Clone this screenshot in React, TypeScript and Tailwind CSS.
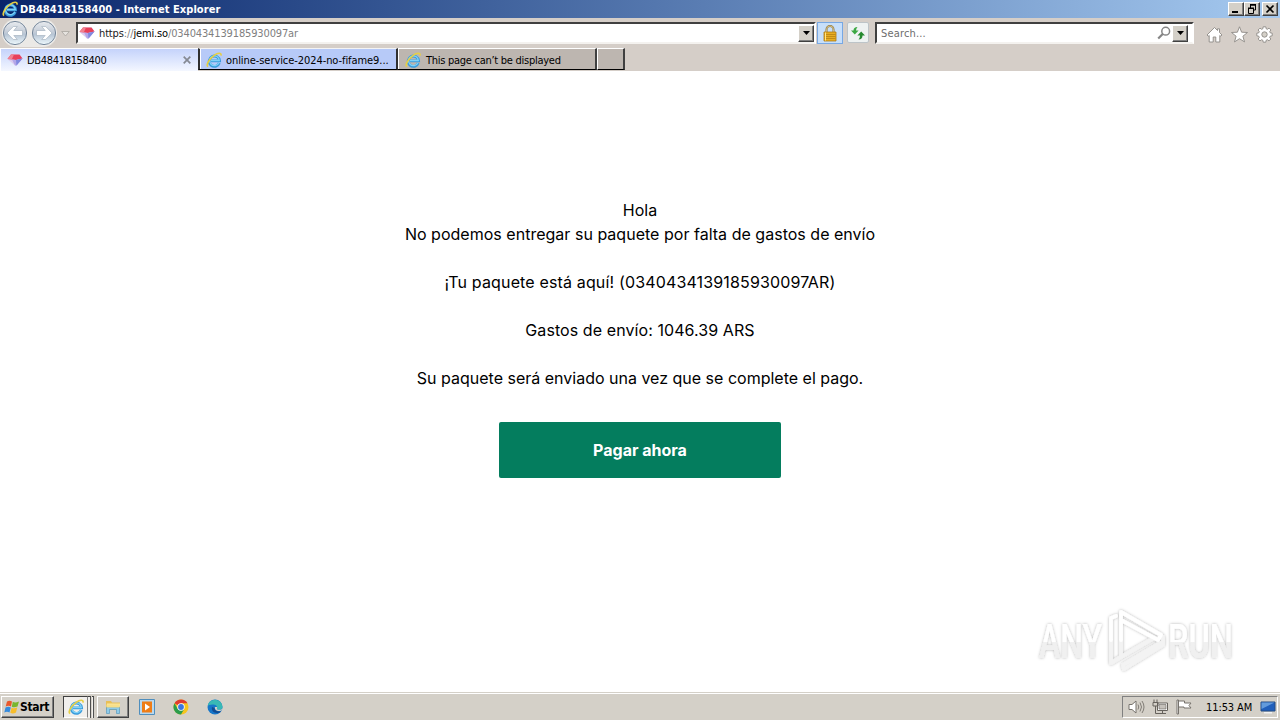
import React from 'react';

const raised =
  'border border-t-white border-l-white border-r-[#404040] border-b-[#404040] shadow-[inset_-1px_-1px_0_#808080] bg-[#d4d0c8]';
const ui = "font-['DejaVu_Sans_Condensed','DejaVu_Sans',sans-serif] [font-stretch:condensed] whitespace-nowrap";

function IeIcon({ className = '' }: { className?: string }) {
  return (
    <svg viewBox="0 0 16 16" className={`h-4 w-4 shrink-0 ${className}`} fill="none">
      <path d="M13.300 11A5.200 5.200 0 1 1 13.600 8.900H5" stroke="#3a9bdc" strokeWidth="2.800" />
      <path d="M12.900 10.700A4.900 4.900 0 1 1 13.300 8.500H5" stroke="#7fd2f7" strokeWidth="1.300" />
      <path d="M2 14.600C-.4 12.900 3.400 6.800 8.200 3.400 11.800.8 15.500.2 15 3.600" stroke="#e6cf45" strokeWidth="1.700" />
    </svg>
  );
}

function GemIcon() {
  return (
    <svg viewBox="0 0 16 12" className="h-3 w-4 shrink-0">
      <path d="M4 .5h8.500L15.500 4.500 9.500 11.500H8L.5 5z" fill="#dccbee" />
      <path d="M4 .5h8.500L15.500 4.500 9 6 .5 5z" fill="#e8405a" />
      <path d="M4 .5h3L5 5 .5 5z" fill="#f1808f" />
      <path d="M5 5.500L9 6l6.500-1.500-6 7H8z" fill="#b3a6e8" />
      <path d="M9 6l6.500-1.500-6 7z" fill="#8088df" />
    </svg>
  );
}

function NavArrow({ flip = false }: { flip?: boolean }) {
  return (
    <svg viewBox="0 0 26 26" className={`h-[26px] w-[26px] shrink-0 ${flip ? '-scale-x-100' : ''}`}>
      <defs>
        <linearGradient id="navFill" x1="0" y1="0" x2="0" y2="1">
          <stop offset="0" stopColor="#e8ebef" />
          <stop offset=".45" stopColor="#c5cdd8" />
          <stop offset=".55" stopColor="#b6c4d4" />
          <stop offset="1" stopColor="#eef9fd" />
        </linearGradient>
      </defs>
      <circle cx="13" cy="13" r="12.500" fill="#f3f2f0" />
      <circle cx="13" cy="13" r="11.600" fill="url(#navFill)" stroke="#76879a" />
      <path d="M5 13l6.300-6.500h4L11.800 10.500H20.500v5h-8.700l3.500 4h-4z" fill="#fff" stroke="#a8b4c2" strokeWidth=".7" />
    </svg>
  );
}

function DropButton() {
  return (
    <div className={`flex h-[17px] w-4 shrink-0 items-center justify-center ${raised}`}>
      <svg viewBox="0 0 7 4" className="h-1 w-[7px]">
        <path d="M0 0h7L3.500 4z" fill="#000" />
      </svg>
    </div>
  );
}

function TitleBar() {
  return (
    <div className="flex h-[18px] items-center bg-linear-to-r from-[#0a246a] to-[#a6caf0] pl-[2px] pr-[2px]">
      <IeIcon />
      <span className={`ml-[2px] grow pt-px text-[11px] leading-[17px] font-bold tracking-[0.06px] text-white ${ui}`}>
        DB48418158400 - Internet Explorer
      </span>
      <div className={`flex h-[14px] w-4 items-center justify-center ${raised}`}>
        <svg viewBox="0 0 12 10" className="h-[10px] w-3"><path d="M2 7h6v2H2z" /></svg>
      </div>
      <div className={`flex h-[14px] w-4 items-center justify-center ${raised}`}>
        <svg viewBox="0 0 12 10" className="h-[10px] w-3" fill="none" stroke="#000">
          <path d="M4 1h6M4.500 1v3M9.500 1v5H8M2 4.500h6M2.500 4v5.500h5V4" />
          <path d="M4 .8h6M2 4.200h6" strokeWidth="1.600" />
        </svg>
      </div>
      <div className={`ml-[2px] flex h-[14px] w-4 items-center justify-center ${raised}`}>
        <svg viewBox="0 0 12 10" className="h-[10px] w-3"><path d="M2.500 1.500l7 7M9.500 1.500l-7 7" stroke="#000" strokeWidth="1.700" /></svg>
      </div>
    </div>
  );
}

function Toolbar() {
  return (
    <div className="flex h-[30px] items-start pt-1">
      <div className="mt-[-3px] ml-[2px] flex h-7 w-[55px] items-center justify-between rounded-full bg-[#ebe9e6]">
        <NavArrow />
        <NavArrow flip />
      </div>
      <svg viewBox="0 0 9 6" className="mt-[9px] ml-[4px] h-[6px] w-[9px]">
        <path d="M.7.5h7.600L4.500 5z" fill="#e6e3df" stroke="#aaa69f" strokeWidth=".8" />
      </svg>
      <div className="ml-[6px] flex h-[22px] w-[740px] items-center border-2 border-t-[#404040] border-l-[#404040] border-r-white border-b-[#f4f2ef] bg-white pl-[1px]">
        <GemIcon />
        <span className={`ml-1 grow pt-[2px] text-[11px] leading-[18px] tracking-[-0.14px] text-[#808080] ${ui}`}>
          <span className="text-[#202020]">https</span>://<span className="text-black">jemi.so</span>/0340434139185930097ar
        </span>
        <DropButton />
      </div>
      <div className="ml-[1px] flex h-[22px] w-[26px] items-center justify-center border border-[#77a8e4] bg-[#c7dffa]">
        <svg viewBox="0 0 14 17" className="h-[17px] w-[14px]">
          <path d="M3.500 8V4.500a3.500 3.500 0 0 1 7 0V8" fill="none" stroke="#91783c" strokeWidth="2" />
          <path d="M3.500 8V4.500a3.500 3.500 0 0 1 7 0V8" fill="none" stroke="#e9d9a5" strokeWidth=".7" />
          <path d="M1 7h12v9H1z" fill="#e8ae22" stroke="#ae790f" strokeWidth=".8" />
          <path d="M1.500 9.500h11M1.500 11.500h11M1.500 13.500h11" stroke="#b88212" strokeWidth=".8" />
          <path d="M2.500 7.500v8" stroke="#ffe58a" />
        </svg>
      </div>
      <div className="ml-[4px] flex h-[21px] w-[22px] items-center justify-center rounded-[2px] border border-[#bdc4c8] bg-[#eef2f2]">
        <svg viewBox="0 0 16 14" className="h-[14px] w-4">
          <path d="M7.500 1Q3.500 1 3.500 4.500H1l3.800 4 3.800-4H6Q6 2.500 7.500 1z" fill="#3ba843" />
          <path d="M8.500 13.500Q12.500 13.500 12.500 9.500H15l-3.800-4-3.800 4H10Q10 12 8.500 13.500z" fill="#268a30" />
        </svg>
      </div>
      <div className="ml-[6px] flex h-[22px] w-[319px] items-center border-2 border-t-[#404040] border-l-[#404040] border-r-white border-b-[#f4f2ef] bg-white pl-[4px]">
        <span className={`grow pt-[2px] text-[11px] leading-[18px] tracking-[0.17px] text-[#6d6d6d] ${ui}`}>Search...</span>
        <svg viewBox="0 0 14 14" className="mr-[1px] h-[14px] w-[14px]" fill="none" stroke="#858585">
          <circle cx="8.700" cy="5.200" r="3.900" strokeWidth="1.500" />
          <path d="M5.700 8L1.200 12.500" strokeWidth="2.200" />
        </svg>
        <DropButton />
        <div className="w-1" />
      </div>
      <div className="mt-[4px] ml-[12px] flex gap-2">
        <svg viewBox="0 0 17 17" className="h-[17px] w-[17px]">
          <path d="M8.500 1.500L1 9l1.300 1.200.9-.8V16h4v-5h2.600v5h4V9.400l.9.800L16 9l-2.500-2.500V2.800h-2v1.700z" fill="#fff" stroke="#8d8a86" strokeWidth=".9" />
        </svg>
        <svg viewBox="0 0 17 17" className="h-[17px] w-[17px]">
          <path d="M8.500.8l2.100 5.400 5.900.3-4.600 3.700 1.600 5.700-5-3.200-5 3.200 1.600-5.700L.5 6.500l5.900-.3z" fill="#fff" stroke="#8d8a86" strokeWidth=".9" />
        </svg>
        <svg viewBox="0 0 17 17" className="h-[17px] w-[17px]">
          <path d="M7.200.8h2.600l.4 2 1.200.5L13 2.100l1.900 1.900-1.200 1.700.5 1.100 2 .4v2.600l-2 .4-.5 1.200 1.200 1.600-1.900 1.900-1.600-1.200-1.200.5-.4 2H7.200l-.4-2-1.200-.5L4 14.900 2.100 13l1.200-1.600-.5-1.200-2-.4V7.200l2-.4.5-1.100L2.100 4 4 2.100l1.600 1.200 1.200-.5z" fill="#fff" stroke="#8d8a86" strokeWidth=".9" />
          <circle cx="8.500" cy="8.500" r="2.700" fill="#d4d0c8" stroke="#8d8a86" strokeWidth=".9" />
        </svg>
      </div>
    </div>
  );
}

function Tabs() {
  return (
    <div className="flex h-[23px] text-[11px] leading-[20px] text-black">
      <div className="flex h-[23px] w-[198px] items-center border-t border-l border-white bg-linear-to-b from-[#c5d3fb] to-[#f4f7ff] pl-[6px] pr-[7px]">
        <GemIcon />
        <span className={`ml-[4px] grow pt-[2px] tracking-[-0.32px] ${ui}`}>DB48418158400</span>
        <svg viewBox="0 0 8 8" className="h-2 w-2"><path d="M.7.7l6.600 6.600M7.300.7L.7 7.300" stroke="#858993" strokeWidth="1.700" /></svg>
      </div>
      <div className="flex h-[22px] w-[200px] items-center border-l-2 border-r-2 border-b border-t border-l-[#303030] border-t-[#f4f4f4] border-r-[#303030] border-b-black bg-[#b7caf8] pl-[6px] shadow-[inset_1px_0_0_#fff]">
        <IeIcon className="mt-px" />
        <span className={`ml-[4px] pt-[3px] tracking-[-0.07px] ${ui}`}>online-service-2024-no-fifame9...</span>
      </div>
      <div className="flex h-[22px] w-[199px] items-center border-r-2 border-b border-t border-t-white border-r-[#404040] border-b-black bg-[#bdb6b0] pl-[7px] shadow-[inset_1px_0_0_#fff]">
        <IeIcon className="mt-px" />
        <span className={`ml-[5px] pt-[3px] tracking-[-0.27px] ${ui}`}>This page can’t be displayed</span>
      </div>
      <div className="h-[22px] w-[28px] border-t border-l border-r-2 border-b border-t-white border-l-white border-r-[#404040] border-b-black bg-[#bdb6b0]" />
    </div>
  );
}

function Watermark() {
  return (
    <svg viewBox="0 0 214 80" className="absolute right-[36px] bottom-[12px] h-20 w-[214px] overflow-visible">
      <defs>
        <linearGradient id="wm" x1="0" y1="24" x2="0" y2="59" gradientUnits="userSpaceOnUse">
          <stop offset=".5" stopColor="#fff" />
          <stop offset=".53" stopColor="#f0f0f0" />
        </linearGradient>
        <filter id="soft" x="-10%" y="-20%" width="120%" height="140%">
          <feDropShadow dx="0" dy="0" stdDeviation="1.500" floodColor="#000" floodOpacity=".3" />
        </filter>
      </defs>
      <g filter="url(#soft)" fill="url(#wm)" className="font-['Roboto',sans-serif]" fontSize="48" fontWeight="500">
        <text x="9" y="58" textLength="63" lengthAdjust="spacingAndGlyphs">ANY</text>
        <text x="138" y="58" textLength="65" lengthAdjust="spacingAndGlyphs">RUN</text>
        <g fill="none" stroke="#f3f3f3" strokeWidth="3.800" strokeLinejoin="round" strokeLinecap="round">
          <path d="M81 40V63l10-6" />
          <path d="M91 40V57l33-19" />
          <path d="M130 43L93 65l1 4 39-24V37" />
          <path d="M81 40V18l5-2M91 40V12l40 23-3 5L91 20" stroke="#fff" />
        </g>
      </g>
    </svg>
  );
}

function Page() {
  return (
    <main className="relative flex h-[621px] flex-col items-center bg-white pt-[127px]">
      <div className="text-center font-['Inter',sans-serif] text-[16px] leading-6 whitespace-pre text-black">
        <p>Hola</p>
        <p className="tracking-[0.02px]">No podemos entregar su paquete por falta de gastos de envío</p>
        <p className="mt-6 tracking-[0.15px]">¡Tu paquete está aquí! (0340434139185930097AR)</p>
        <p className="mt-6 tracking-[0.08px]">Gastos de envío: 1046.39 ARS</p>
        <p className="mt-6">Su paquete será enviado una vez que se complete el pago.</p>
      </div>
      <button className="mt-8 h-14 w-[282px] rounded-[2px] bg-[#047d5e] font-['Inter',sans-serif] text-[16px] font-bold text-white">
        Pagar ahora
      </button>
      <Watermark />
    </main>
  );
}

function Taskbar() {
  return (
    <footer className="flex h-7 items-center border-t border-[#d4d0c8] bg-[#d4d0c8] pr-[2px] pl-px shadow-[inset_0_1px_0_#fff]">
      <div className={`mt-px flex h-[22px] w-[53px] items-center pl-[2px] ${raised}`}>
        <svg viewBox="0 0 16 16" className="h-4 w-4">
          <path d="M3 2.500Q5.500 1 8 2.500L7 7.500Q4.500 6 1.700 7.500z" fill="#e9582b" />
          <path d="M8.800 2.700Q11 4.200 15 2.500L13.500 7.500Q10 9 7.800 7.700z" fill="#79b62e" />
          <path d="M1.500 8.500Q4.500 7 6.800 8.500L5.500 13.500Q3 12 .3 13.500z" fill="#358bdd" />
          <path d="M7.600 8.800Q10 10 13.200 8.500L12 13.500Q9 15.200 6.300 13.800z" fill="#f7bd2b" />
        </svg>
        <span className={`text-[12px] leading-[18px] font-bold tracking-[-0.3px] ${ui}`}>Start</span>
      </div>
      <div className="mt-px ml-[9px] flex h-[22px] w-[25px] items-center justify-center border border-t-[#404040] border-l-[#404040] border-r-[#808080] border-b-white bg-[#f1efec]">
        <IeIcon />
      </div>
      <div className="mt-px h-[22px] w-[3px] border-t border-r border-t-[#404040] border-r-[#505050] bg-[#f1efec]" />
      <div className="mt-px ml-[1px] h-[22px] w-[2px] border-t border-r border-t-[#404040] border-r-[#505050] bg-[#f1efec]" />
      <div className={`mt-px ml-[3px] flex h-[22px] w-8 items-center justify-center ${raised}`}>
        <svg viewBox="0 0 16 16" className="h-4 w-4">
          <path d="M1 2h5l1 1.500h8V11H1z" fill="#e8bf56" />
          <path d="M2 4.500h13V10H2z" fill="#fbe69c" />
          <path d="M1.500 8h13v6.500h-3v-4h-7v4h-3z" fill="#8ecbe9" stroke="#4c91ba" strokeWidth=".6" />
          <path d="M1.500 5.500h13v3h-13z" fill="#f7df89" />
        </svg>
      </div>
      <svg viewBox="0 0 16 16" className="mt-px ml-[10px] h-4 w-4">
        <path d="M.5.500h15v15H.5z" fill="#b9d8ee" stroke="#4f8ebd" />
        <path d="M3 2.500h10v11H3z" fill="#ef7d16" />
        <path d="M6 4.500l5 3.500-5 3.500z" fill="#fff" />
      </svg>
      <svg viewBox="0 0 16 16" className="mt-px ml-[18px] h-4 w-4">
        <circle cx="8" cy="8" r="7.500" fill="#f6c51e" />
        <path d="M8 8L1.500 4.250A7.500 7.500 0 0 1 14.500 4.250H8z" fill="#df3b30" />
        <path d="M1.500 4.250A7.500 7.500 0 0 0 8 15.500L11.200 9.900 4.800 9.900z" fill="#2b9c4c" />
        <circle cx="8" cy="8" r="3.700" fill="#fff" />
        <circle cx="8" cy="8" r="2.900" fill="#3b76e0" />
      </svg>
      <svg viewBox="0 0 16 16" className="mt-px ml-[18px] h-4 w-4">
        <circle cx="8" cy="8" r="7.500" fill="#1676c9" />
        <path d="M.6 7A7.500 7.500 0 0 1 15.500 8c0 3-4.500 3.500-5.700 2C11 8.500 9.500 5.500 6.500 5.500 3.500 5.200 1 6.500.6 7z" fill="#38b9b5" />
        <path d="M5 8c-1 3 1.500 6 5 6 2 0 3.500-.7 4.300-1.800C11 13.300 7.500 11.500 7.500 9z" fill="#124b91" />
        <path d="M8 8c-.5 1.500.5 4 4 4 1.500 0 2.300-.3 3.200-1.200L15 10c-1.500 1.200-4.800 1-5.300 0 .7-.8.500-1.500.3-2z" fill="#d4d0c8" />
      </svg>
      <div className="grow" />
      <div className="mt-px flex h-[22px] w-[156px] items-center border border-t-[#808080] border-l-[#808080] border-r-white border-b-white pl-[5px]">
        <svg viewBox="0 0 17 16" className="h-4 w-[17px]" fill="none" stroke="#77736d">
          <path d="M1 5.500h3L8 2v12l-4-3.500H1z" fill="#fff" />
          <path d="M10 5.500q1.500 2.500 0 5M12 3.500q3 4.500 0 9M14 2q4 6 0 12" strokeWidth=".9" />
        </svg>
        <svg viewBox="0 0 16 16" className="ml-[7px] h-4 w-4" fill="none" stroke="#66625c">
          <path d="M5.500 4h10v7.500h-10z" fill="#fff" />
          <path d="M7 5.500h7V10H7z" fill="#c5c1bb" strokeWidth=".6" />
          <path d="M2 .5v3M5 .5v3M1 3.500h5V7H1zM3.500 7v7.500H14M10.500 11.500v3" />
        </svg>
        <svg viewBox="0 0 16 16" className="ml-[8px] h-4 w-4" fill="#fff" stroke="#77736d">
          <path d="M1 1h1.500v14H1z" />
          <path d="M2.500 2h6v2H15l-2 2.500L15 9H8V8H2.500z" />
        </svg>
        <span className={`ml-[14px] w-[47px] pt-px text-[11px] leading-[18px] tracking-[-0.1px] text-black ${ui}`}>11:53 AM</span>
        <svg viewBox="0 0 16 13" className="ml-[7px] h-[13px] w-4 shrink-0">
          <path d="M1 1h14v9H1z" fill="#205fbb" stroke="#254c82" />
          <path d="M1.500 1.500h13L1.500 8z" fill="#629bdc" />
          <path d="M4 11h8v1.500H4z" fill="#f1f1f1" />
        </svg>
      </div>
    </footer>
  );
}

export default function App() {
  return (
    <div className="flex h-[720px] w-[1280px] flex-col overflow-hidden bg-white">
      <TitleBar />
      <div className="h-[53px] bg-[#d5cec8]">
        <Toolbar />
        <Tabs />
      </div>
      <Page />
      <Taskbar />
    </div>
  );
}
